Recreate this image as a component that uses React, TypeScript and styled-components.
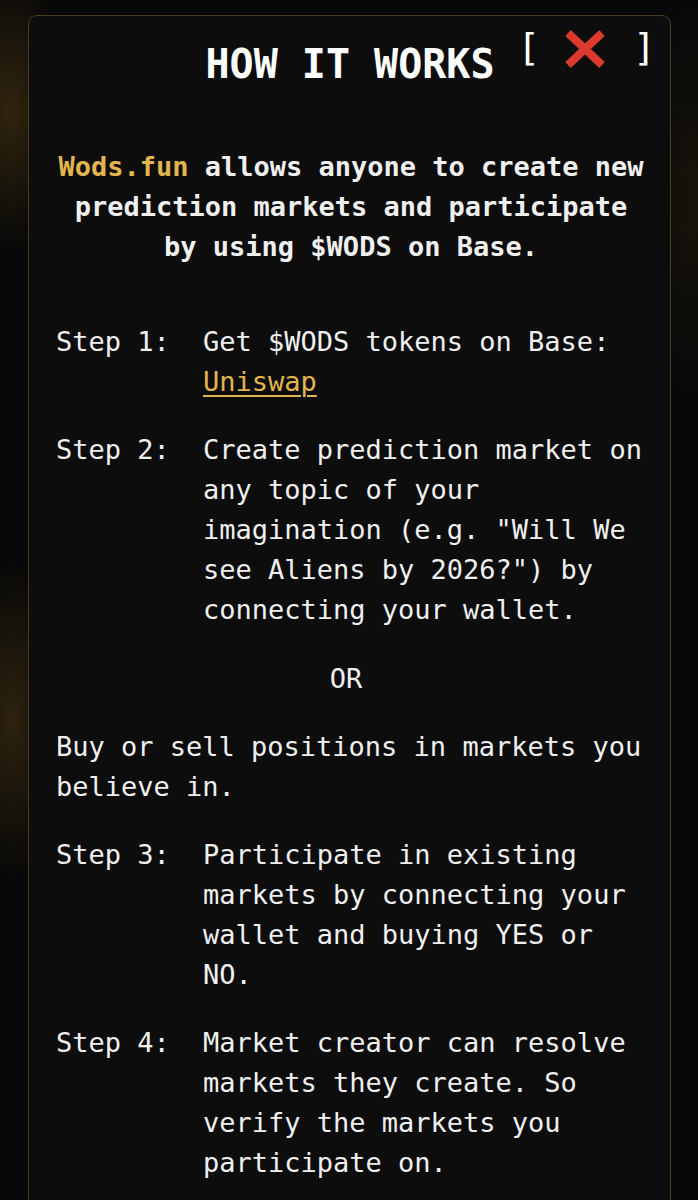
import * as React from 'react';
import styled, { createGlobalStyle } from 'styled-components';

const GlobalStyle = createGlobalStyle`
    html, body {
        margin: 0;
        padding: 0;
        background: #070707;
    }
`;

const Page = styled.div`
    min-height: 1200px;
    padding: 15px 27px 0 28px;
    box-sizing: border-box;
    overflow: hidden;
    font-family: "DejaVu Sans Mono", "Liberation Mono", monospace;
    background:
        radial-gradient(ellipse 60px 140px at 10px 110px, rgba(150, 110, 30, 0.28), transparent),
        radial-gradient(ellipse 55px 160px at 12px 720px, rgba(150, 110, 30, 0.26), transparent),
        radial-gradient(ellipse 50px 200px at 690px 200px, rgba(120, 90, 30, 0.14), transparent),
        #080808;
`;

const Panel = styled.div`
    position: relative;
    min-height: 1200px;
    padding: 24px 24px 0 27px;
    background: #0d0d0d;
    border: 1px solid #4a3c1e;
    border-radius: 9px;
    color: #f0f0f0;
`;

const Title = styled.h1`
    margin: 0;
    font-size: 40px;
    line-height: 48px;
    font-weight: bold;
    text-align: center;
    color: #ffffff;
    padding-right: 2px;
`;

const Close = styled.button`
    position: absolute;
    top: 11px;
    right: 14px;
    display: flex;
    align-items: center;
    padding: 0;
    border: 0;
    background: none;
    color: #ffffff;
    font-family: inherit;
    font-size: 38px;
    line-height: 44px;
    cursor: pointer;

    svg {
        margin: 0 25px 0 22px;
    }
`;

const Bracket = styled.span`
    position: relative;
    top: -2px;
`;

const Intro = styled.p`
    margin: 59px 0 0 0;
    font-size: 27px;
    line-height: 40px;
    font-weight: bold;
    text-align: center;
`;

const Brand = styled.span`
    color: #e2b54e;
`;

const Block = styled.div`
    margin-top: ${(p: { gap?: number }) => p.gap ?? 28}px;
    font-size: 27px;
    line-height: 40px;
`;

const Step = styled(Block)`
    display: grid;
    grid-template-columns: 147px 1fr;
`;

const Center = styled(Block)`
    text-align: center;
    padding-right: 10px;
`;

const Link = styled.a`
    color: #e2b54e;
    text-decoration: underline;
    text-underline-offset: 4px;
    text-decoration-thickness: 2px;
`;

function CrossMark() {
    return (
        <svg width="46" height="40" viewBox="0 0 46 40">
            <path d="M6 4 L40 36 M40 4 L6 36" stroke="#dd3a2e" strokeWidth="8" strokeLinecap="butt" />
        </svg>
    );
}

export default function App() {
    return (
        <Page>
            <GlobalStyle />
            <Panel>
                <Title>HOW IT WORKS</Title>
                <Close>
                    <Bracket>[</Bracket>
                    <CrossMark />
                    <Bracket>]</Bracket>
                </Close>
                <Intro>
                    <Brand>Wods.fun</Brand> allows anyone to create new prediction markets and participate by using $WODS on Base.
                </Intro>
                <Step gap={55}>
                    <span>Step 1:</span>
                    <span>Get $WODS tokens on Base: <Link href="#">Uniswap</Link></span>
                </Step>
                <Step>
                    <span>Step 2:</span>
                    <span>Create prediction market on any topic of your imagination (e.g. "Will We see Aliens by 2026?") by connecting your wallet.</span>
                </Step>
                <Center gap={29}>OR</Center>
                <Block>Buy or sell positions in markets you believe in.</Block>
                <Step>
                    <span>Step 3:</span>
                    <span>Participate in existing markets by connecting your wallet and buying YES or NO.</span>
                </Step>
                <Step>
                    <span>Step 4:</span>
                    <span>Market creator can resolve markets they create. So verify the markets you participate on.</span>
                </Step>
            </Panel>
        </Page>
    );
}
